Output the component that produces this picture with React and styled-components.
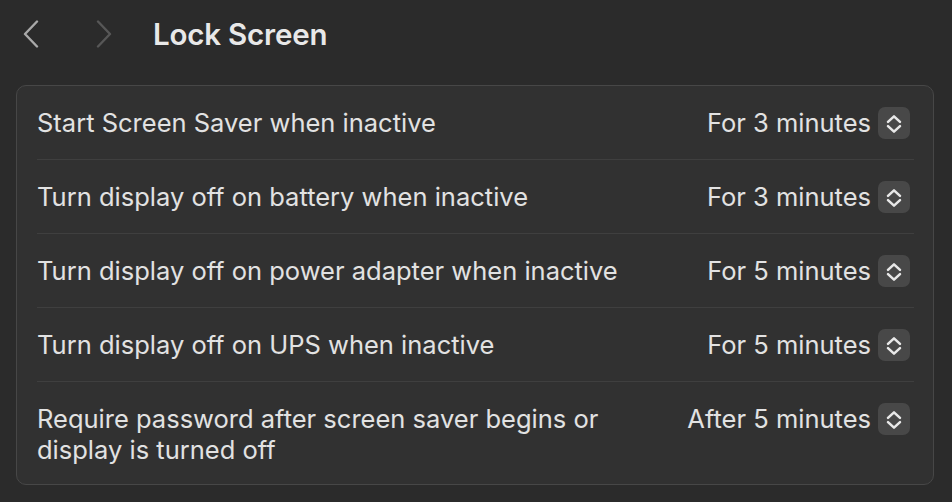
import React from 'react';
import styled, { createGlobalStyle } from 'styled-components';

const GlobalStyle = createGlobalStyle`
  html, body {
    margin: 0;
    padding: 0;
    background: #2b2b2b;
  }
  body {
    font-family: Inter, "Noto Sans", "Liberation Sans", sans-serif;
    color: #e2e2e2;
    -webkit-font-smoothing: antialiased;
  }
`;

const Page = styled.div`
  width: 952px;
  height: 502px;
  box-sizing: border-box;
  padding: 0 18px 0 16px;
  display: flex;
  flex-direction: column;
`;

const Header = styled.header`
  height: 67px;
  display: flex;
  align-items: center;
  padding-left: 7px;
`;

const NavButton = styled.button`
  width: 16px;
  height: 28px;
  padding: 0;
  border: none;
  background: none;
  margin-right: ${(p) => p.$gap || 0}px;
  color: ${(p) => (p.$disabled ? '#575757' : '#a9a9a9')};
  display: flex;
  align-items: center;
  justify-content: center;
`;

const Title = styled.h1`
  margin: 0;
  font-size: 29.5px;
  font-weight: 600;
  color: #e8e8e8;
  letter-spacing: -0.2px;
`;

const Panel = styled.section`
  margin-top: 18px;
  background: #313131;
  border: 1px solid #474747;
  border-radius: 10px;
  padding: 0 19px 0 20px;
`;

const Row = styled.div`
  display: flex;
  align-items: flex-start;
  justify-content: space-between;
  padding: ${(p) => (p.$last ? '21px 0 19px' : '21px 0')};
  border-bottom: ${(p) => (p.$last ? 'none' : '1px solid #3f3f3f')};
`;

const Label = styled.div`
  font-size: 25.5px;
  line-height: 31px;
  color: #e2e2e2;
  max-width: 600px;
`;

const Control = styled.div`
  display: flex;
  align-items: center;
  gap: 7px;
  margin-right: 4px;
  height: 31px;
  flex-shrink: 0;
`;

const Value = styled.span`
  font-size: 25.5px;
  line-height: 31px;
  color: #e2e2e2;
`;

const Stepper = styled.button`
  width: 32px;
  height: 32px;
  padding: 0;
  border: none;
  border-radius: 7px;
  background: #484848;
  color: #e8e8e8;
  display: flex;
  align-items: center;
  justify-content: center;
`;

const Chevron = ({ dir }) => (
  <svg width="16" height="28" viewBox="0 0 16 28" fill="none">
    <path
      d={dir === 'left' ? 'M14 1.5 L2 14 L14 26.5' : 'M2 1.5 L14 14 L2 26.5'}
      stroke="currentColor"
      strokeWidth="2.4"
      strokeLinecap="round"
      strokeLinejoin="round"
    />
  </svg>
);

const UpDown = () => (
  <svg width="32" height="32" viewBox="0 0 32 32" fill="none">
    <path d="M10 14.8 L16 9.3 L22 14.8" stroke="currentColor" strokeWidth="2.5" strokeLinecap="round" strokeLinejoin="round" />
    <path d="M10 19.2 L16 24.7 L22 19.2" stroke="currentColor" strokeWidth="2.5" strokeLinecap="round" strokeLinejoin="round" />
  </svg>
);

const settings = [
  { label: 'Start Screen Saver when inactive', value: 'For 3 minutes' },
  { label: 'Turn display off on battery when inactive', value: 'For 3 minutes' },
  { label: 'Turn display off on power adapter when inactive', value: 'For 5 minutes' },
  { label: 'Turn display off on UPS when inactive', value: 'For 5 minutes' },
  { label: 'Require password after screen saver begins or display is turned off', value: 'After 5 minutes' },
];

export default function App() {
  return (
    <>
      <GlobalStyle />
      <Page>
        <Header>
          <NavButton $gap={57}>
            <Chevron dir="left" />
          </NavButton>
          <NavButton $disabled $gap={41}>
            <Chevron dir="right" />
          </NavButton>
          <Title>Lock Screen</Title>
        </Header>
        <Panel>
          {settings.map((s, i) => (
            <Row key={s.label} $last={i === settings.length - 1}>
              <Label>{s.label}</Label>
              <Control>
                <Value>{s.value}</Value>
                <Stepper>
                  <UpDown />
                </Stepper>
              </Control>
            </Row>
          ))}
        </Panel>
      </Page>
    </>
  );
}
